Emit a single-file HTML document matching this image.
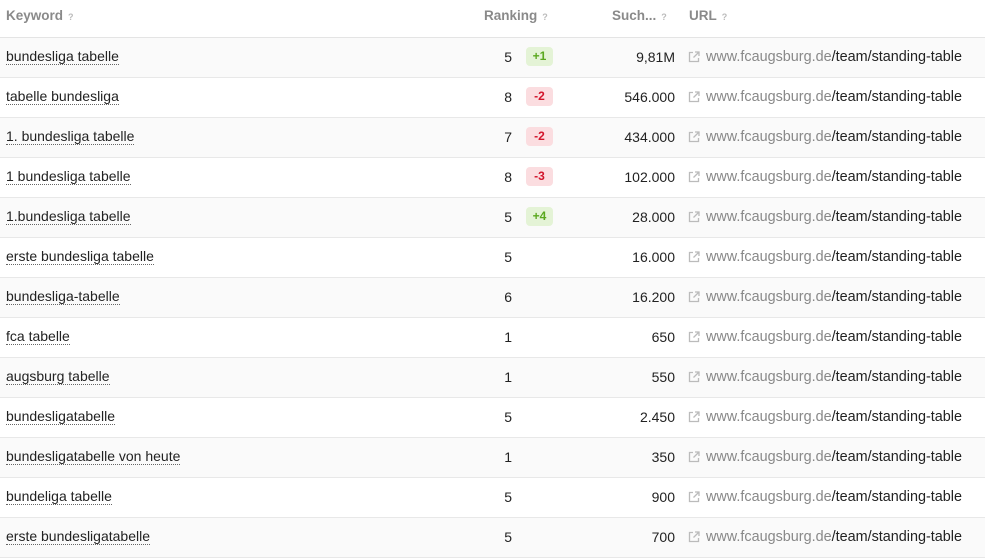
<!DOCTYPE html>
<html><head><meta charset="utf-8"><style>
body{margin:0;width:985px;height:554px;overflow:hidden;background:#fff;font-family:"Liberation Sans",sans-serif;font-size:14px;color:#222}
.h{height:37px;border-bottom:1px solid #e4e4e4;position:relative;font-weight:bold;color:#8a8a8a;font-size:13.5px}
.h span{position:absolute;top:8px}
.q{font-size:9px;color:#bbb;margin-left:5px;font-weight:bold}
.r{height:39px;border-bottom:1px solid #e8e8e8;position:relative}
.r:nth-child(even){background:#fafafa}
.r>*{position:absolute;top:11px;white-space:nowrap}
.k{left:6px;border-bottom:1px dotted #666;line-height:15px}
.n{right:473px}
.b{left:526px;top:9px;width:27px;height:19px;border-radius:4px;font-size:12px;font-weight:bold;text-align:center;line-height:19px}
.g{background:#e4f3d6;color:#5aa81e}
.rd{background:#fbdde0;color:#d2142b}
.v{right:310px}
.i{left:688px;top:13px}
.u{left:706px;top:10.5px;color:#222;font-size:14.4px}
.u i{font-style:normal;color:#888}
</style></head><body>
<div class="h"><span style="left:6px">Keyword<span class="q" style="position:static">?</span></span><span style="left:484px">Ranking<span class="q" style="position:static">?</span></span><span style="left:612px">Such...<span class="q" style="position:static">?</span></span><span style="left:689px">URL<span class="q" style="position:static">?</span></span></div>
<div id="rows"></div>
<script>
var d=[["bundesliga tabelle","5","+1","9,81M"],["tabelle bundesliga","8","-2","546.000"],["1. bundesliga tabelle","7","-2","434.000"],["1 bundesliga tabelle","8","-3","102.000"],["1.bundesliga tabelle","5","+4","28.000"],["erste bundesliga tabelle","5","","16.000"],["bundesliga-tabelle","6","","16.200"],["fca tabelle","1","","650"],["augsburg tabelle","1","","550"],["bundesligatabelle","5","","2.450"],["bundesligatabelle von heute","1","","350"],["bundeliga tabelle","5","","900"],["erste bundesligatabelle","5","","700"]];
var ic='<svg class="i" width="12" height="12" viewBox="0 0 12 12" fill="none" stroke="#bbb" stroke-width="1.3"><path d="M5 1.5H1.5v9h9V7M7 1h4v4M11 1L5.5 6.5"/></svg>';
var h='';d.forEach(function(r){h+='<div class="r"><span class="k">'+r[0]+'</span><span class="n">'+r[1]+'</span>'+(r[2]?'<span class="b '+(r[2][0]=='+'?'g':'rd')+'">'+r[2]+'</span>':'')+'<span class="v">'+r[3]+'</span>'+ic+'<span class="u"><i>www.fcaugsburg.de</i>/team/standing-table</span></div>'});
document.getElementById('rows').outerHTML=h;
</script>
</body></html>
